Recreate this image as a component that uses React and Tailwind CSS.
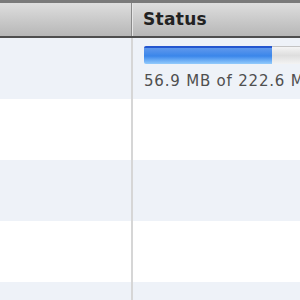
export default function App() {
  const rows = [0, 1, 2, 3, 4];

  return (
    <div className="w-[300px] h-[300px] overflow-hidden bg-white" style={{ fontFamily: '"DejaVu Sans", Verdana, sans-serif' }}>
      <div className="flex h-[38px] border-t-[3px] border-t-[#7a7a7a] border-b-2 border-b-[#4e4e4e] bg-gradient-to-b from-[#dedede] to-[#b7b7b7]">
        <div className="w-[131px] shrink-0" />
        <div className="w-px bg-[#8a8a8a]" />
        <div className="w-px bg-[#e6e6e6]" />
        <div className="flex-1 flex items-center pl-[10px] text-[17px] tracking-[0.3px] font-bold text-[#222222] whitespace-nowrap">
          Status
        </div>
      </div>

      {rows.map((i) => (
        <div
          key={i}
          className={`flex h-[61px] ${i % 2 === 0 ? "bg-[#eef2f8]" : "bg-white"}`}
        >
          <div className="w-[131px] shrink-0" />
          <div className="w-[2px] bg-[#d6d6d6]" />
          <div className="flex-1 min-w-0 pl-[11px] pt-[8px] overflow-hidden">
            {i === 0 && (
              <div>
                <div className="flex h-[18px] w-[200px] rounded-[2px] overflow-hidden">
                  <div className="w-[128px] border-t-2 border-[#2456cf] bg-gradient-to-b from-[#5f98ec] via-[#3a86ea] to-[#93cbfc]" />
                  <div className="flex-1 border-t border-[#c4c4c4] bg-gradient-to-b from-[#f4f4f4] via-[#dedede] to-[#f3f3f3]" />
                </div>
                <div className="mt-[8px] text-[15px] leading-[18px] tracking-[0.8px] text-[#4f4f4f] whitespace-nowrap">
                  56.9 MB of 222.6 MB
                </div>
              </div>
            )}
          </div>
        </div>
      ))}
    </div>
  );
}
